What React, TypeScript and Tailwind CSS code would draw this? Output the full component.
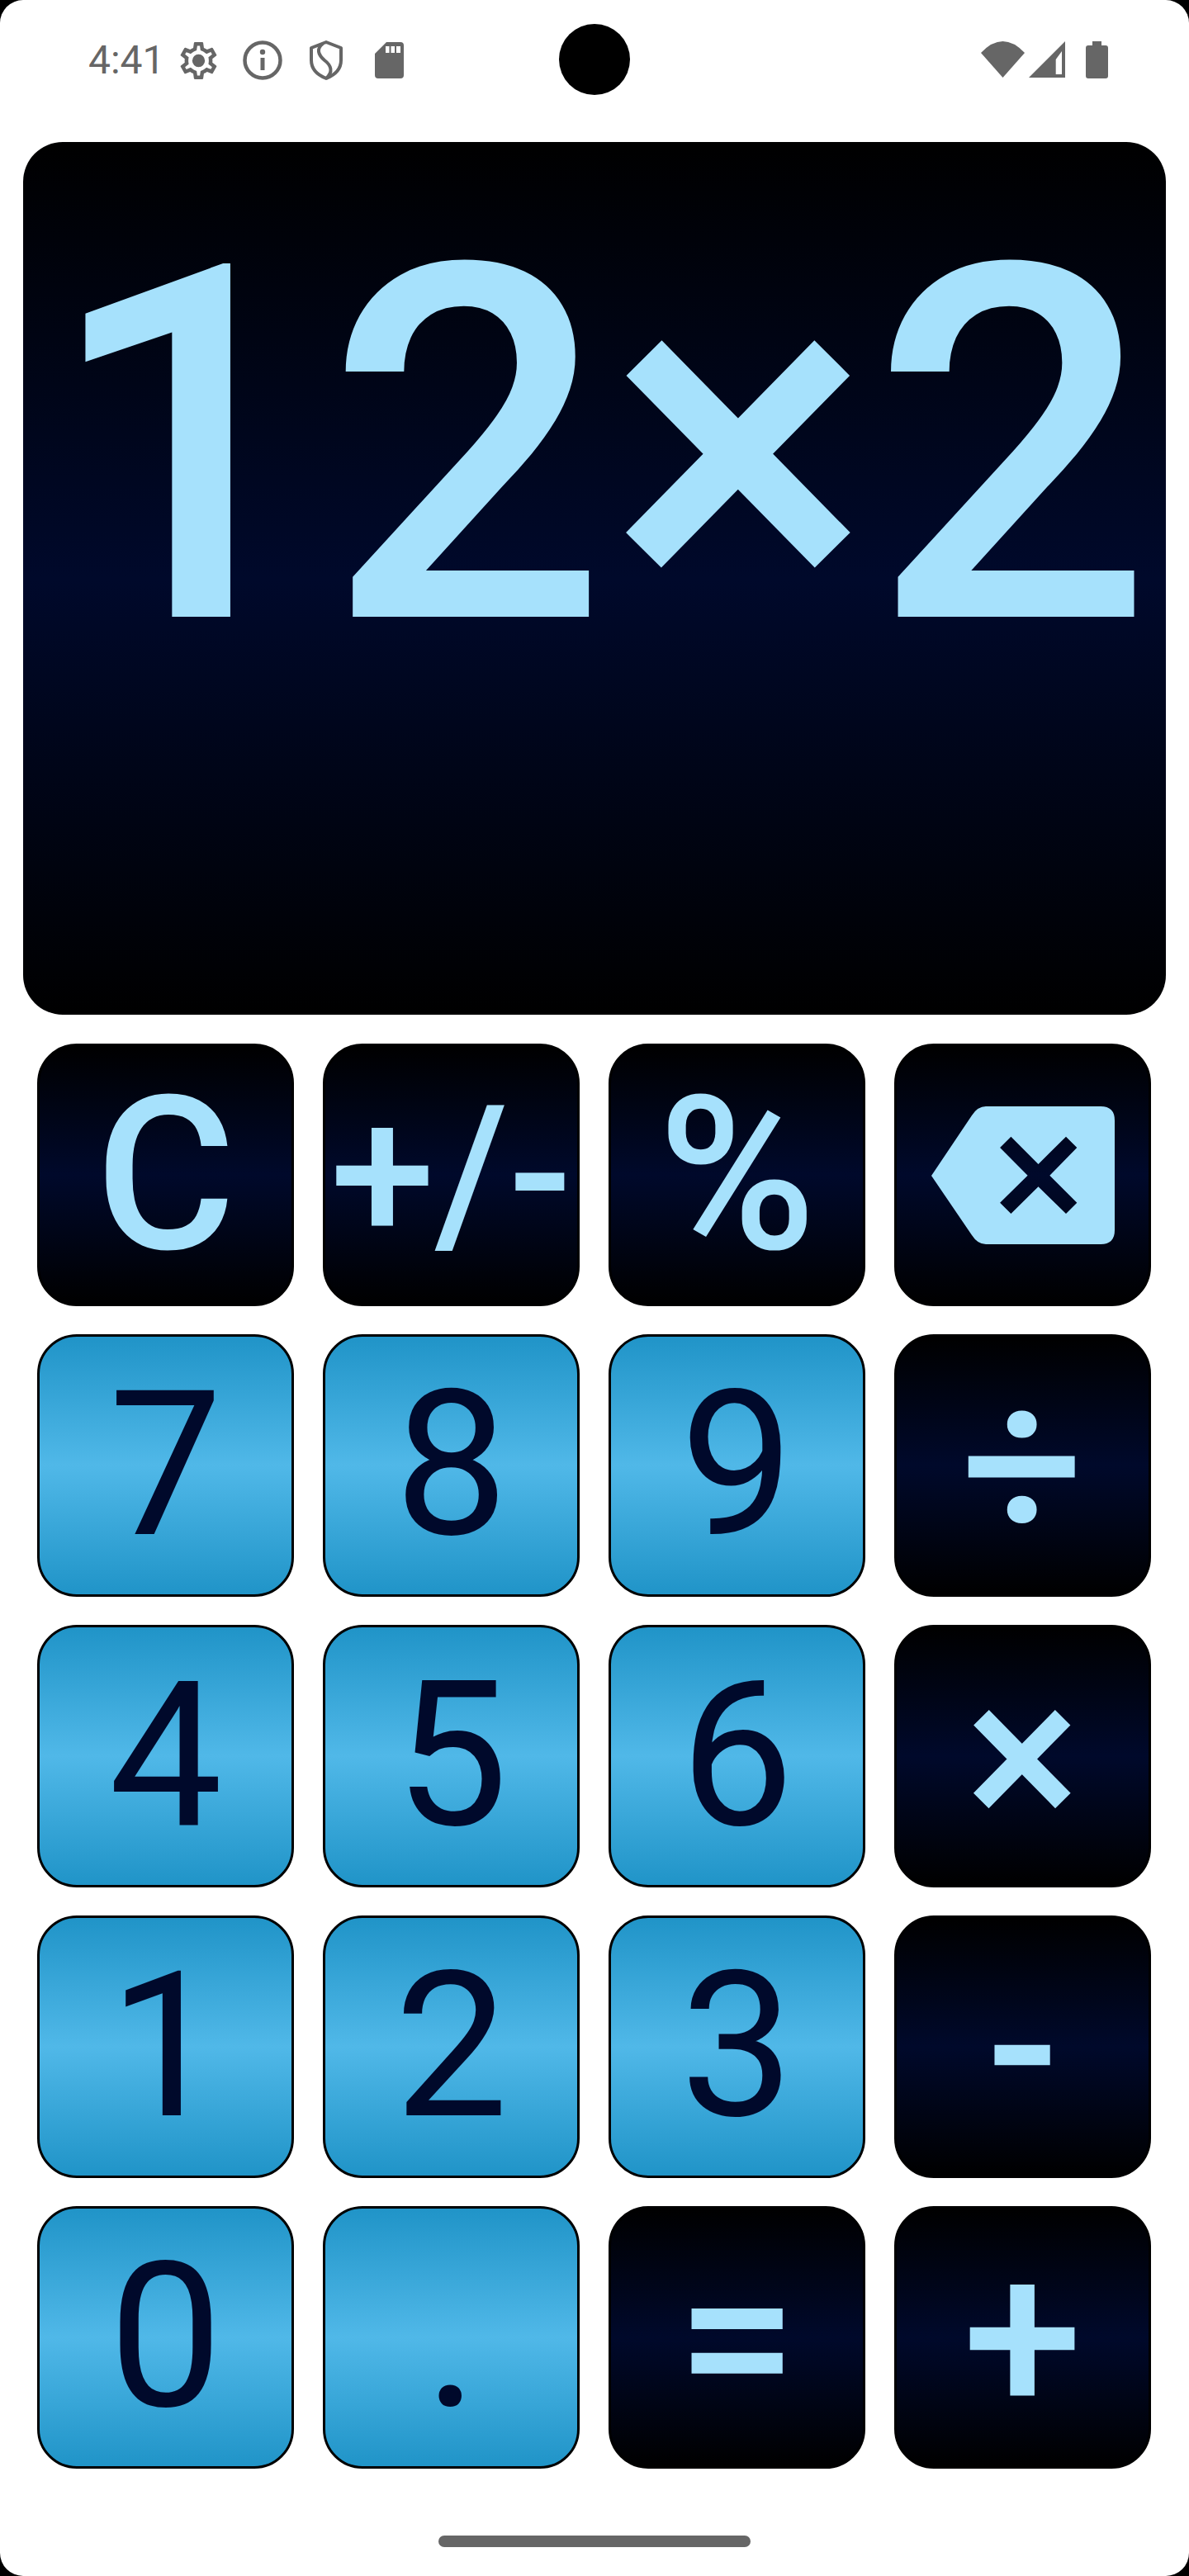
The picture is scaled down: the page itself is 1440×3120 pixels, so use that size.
import { ReactNode } from "react";

type Key = {
  label: ReactNode;
  kind: "op" | "num";
  size?: string;
};

function GearIcon() {
  return (
    <svg viewBox="2 2 20 20" className="h-[45px] w-[45px]" fill="#666666">
      <path d="M19.43 12.98c.04-.32.07-.64.07-.98 0-.34-.03-.66-.07-.98l2.11-1.65c.19-.15.24-.42.12-.64l-2-3.46c-.09-.16-.26-.25-.44-.25-.06 0-.12.01-.17.03l-2.49 1c-.52-.4-1.08-.73-1.69-.98l-.38-2.65C14.46 2.18 14.25 2 14 2h-4c-.25 0-.46.18-.49.42l-.38 2.65c-.61.25-1.17.59-1.69.98l-2.49-1c-.06-.02-.12-.03-.18-.03-.17 0-.34.09-.43.25l-2 3.46c-.13.22-.07.49.12.64l2.11 1.65c-.04.32-.07.65-.07.98 0 .33.03.66.07.98l-2.11 1.65c-.19.15-.24.42-.12.64l2 3.46c.09.16.26.25.44.25.06 0 .12-.01.17-.03l2.49-1c.52.4 1.08.73 1.69.98l.38 2.65c.03.24.24.42.49.42h4c.25 0 .46-.18.49-.42l.38-2.65c.61-.25 1.17-.59 1.69-.98l2.49 1c.06.02.12.03.18.03.17 0 .34-.09.43-.25l2-3.46c.12-.22.07-.49-.12-.64l-2.11-1.65zm-1.98-1.71c.04.31.05.52.05.73 0 .21-.02.43-.05.73l-.14 1.13.89.7 1.08.84-.7 1.21-1.27-.51-1.04-.42-.9.68c-.43.32-.84.56-1.25.73l-1.06.43-.16 1.13-.2 1.35h-1.4l-.19-1.35-.16-1.13-1.06-.43c-.43-.18-.83-.41-1.23-.71l-.91-.7-1.06.43-1.27.51-.7-1.21 1.08-.84.89-.7-.14-1.13c-.03-.31-.05-.54-.05-.74s.02-.43.05-.73l.14-1.13-.89-.7-1.08-.84.7-1.21 1.27.51 1.04.42.9-.68c.43-.32.84-.56 1.25-.73l1.06-.43.16-1.13.2-1.35h1.39l.19 1.35.16 1.13 1.06.43c.43.18.83.41 1.23.71l.91.7 1.06-.43 1.27-.51.7 1.21-1.07.85-.89.7.14 1.13z" />
      <circle cx="12" cy="12" r="3.4" />
    </svg>
  );
}

function InfoIcon() {
  return (
    <svg viewBox="0 0 48 48" className="h-[48px] w-[48px]" fill="#666666">
      <circle cx="24" cy="24" r="21.5" fill="none" stroke="#666666" strokeWidth="4.5" />
      <circle cx="24" cy="14" r="3.2" />
      <rect x="21.5" y="21" width="5" height="15" />
    </svg>
  );
}

function ShieldIcon() {
  return (
    <svg viewBox="0 0 40 48" className="h-[48px] w-[40px]" fill="none" stroke="#666666" strokeWidth="4">
      <path d="M20 2 L38 9 V24 C38 35 30 42 20 46 C10 42 2 35 2 24 V9 Z" strokeLinejoin="round" />
      <path d="M16 4 C8 10 10 17 18 24 C26 30 29 38 20 46" />
    </svg>
  );
}

function SdIcon() {
  return (
    <svg viewBox="0 0 35 44" className="h-[44px] w-[35px]">
      <path
        fillRule="evenodd"
        fill="#666666"
        d="M14 0 H31 a4 4 0 0 1 4 4 V40 a4 4 0 0 1 -4 4 H4 a4 4 0 0 1 -4 -4 V14 Z M13 5 V13 H17.5 V5 Z M19.5 5 V13 H24 V5 Z M26 5 V13 H31 V5 Z"
      />
    </svg>
  );
}

function WifiIcon() {
  return (
    <svg viewBox="0 0 53 44" className="h-[44px] w-[53px]" fill="#666666">
      <path d="M0 14 Q26.5 -14 53 14 L26.5 44 Z" />
    </svg>
  );
}

function SignalIcon() {
  return (
    <svg viewBox="0 0 44 44" className="h-[44px] w-[44px]">
      <path fillRule="evenodd" fill="#666666" d="M0 44 L44 0 V44 Z M32.7 22 V40 H40 V12 Z" />
    </svg>
  );
}

function BatteryIcon() {
  return (
    <svg viewBox="0 0 27 45" className="h-[45px] w-[27px]" fill="#666666">
      <path d="M8 0 H19 V5 H24 a3 3 0 0 1 3 3 V42 a3 3 0 0 1 -3 3 H3 a3 3 0 0 1 -3 -3 V8 a3 3 0 0 1 3 -3 H8 Z" />
    </svg>
  );
}

function BackspaceIcon() {
  return (
    <svg viewBox="0 0 222 167" className="h-[167px] w-[222px]">
      <path
        fillRule="evenodd"
        fill="#a6e1fc"
        d="M0 84 L49 11 Q56 0 66 0 H205 Q222 0 222 17 V150 Q222 167 205 167 H66 Q56 167 49 156 Z M96.4 36.7 L83.1 50 L116.6 83.7 L83.1 116.7 L96.4 130 L129.5 97.3 L163 130 L176.3 116.7 L143.3 83.7 L176.3 50 L163 36.7 L129.5 70 Z"
      />
    </svg>
  );
}

const keys: Key[] = [
  { label: "C", kind: "op" },
  { label: "+/-", kind: "op", size: "text-[228px]" },
  { label: "%", kind: "op" },
  { label: <BackspaceIcon />, kind: "op" },
  { label: "7", kind: "num" },
  { label: "8", kind: "num" },
  { label: "9", kind: "num" },
  { label: "÷", kind: "op" },
  { label: "4", kind: "num" },
  { label: "5", kind: "num" },
  { label: "6", kind: "num" },
  { label: "×", kind: "op" },
  { label: "1", kind: "num" },
  { label: "2", kind: "num" },
  { label: "3", kind: "num" },
  { label: "-", kind: "op" },
  { label: "0", kind: "num" },
  { label: ".", kind: "num" },
  { label: "=", kind: "op" },
  { label: "+", kind: "op" },
];

function CalcKey({ label, kind, size }: Key) {
  const tone =
    kind === "op"
      ? `from-black via-[#00092b] to-black text-[#a6e1fc] font-medium ${size ?? "text-[260px]"}`
      : "from-[#2094c8] via-[#50b8e8] to-[#2094c8] text-[#00092b] text-[245px]";
  return (
    <button
      className={`flex h-[318px] items-center justify-center overflow-hidden whitespace-nowrap rounded-[48px] border-[3px] border-black bg-linear-to-b/srgb ${tone}`}
    >
      {label}
    </button>
  );
}

export default function App() {
  return (
    <div className="h-[3120px] w-[1440px] bg-black font-['Roboto',sans-serif]">
      <div className="flex h-full flex-col overflow-hidden rounded-[28px] bg-white">
        <header className="grid h-[172px] shrink-0 grid-cols-[1fr_86px_1fr] items-start">
          <div className="flex h-[146px] items-center pl-[107px] text-[48px] text-[#666666]">
            <span className="w-[88px]">4:41</span>
            <span className="ml-[23px]"><GearIcon /></span>
            <span className="ml-[31px]"><InfoIcon /></span>
            <span className="ml-[33px]"><ShieldIcon /></span>
            <span className="ml-[39px]"><SdIcon /></span>
          </div>
          <div className="mt-[29px] h-[86px] w-[86px] rounded-full bg-black" />
          <div className="flex h-[144px] items-center justify-end gap-[5px] pr-[98px]">
            <WifiIcon />
            <SignalIcon />
            <span className="ml-[20px]"><BatteryIcon /></span>
          </div>
        </header>

        <section className="mx-[28px] flex h-[1057px] shrink-0 justify-center overflow-hidden rounded-[48px] bg-linear-to-b/srgb from-black via-[#00092b] to-black pt-[18px] pl-[10px] text-[600px] leading-[703px] font-medium whitespace-nowrap text-[#a6e1fc]">
          12×2
        </section>

        <main className="mt-[35px] grid grid-cols-[repeat(4,311px)] gap-x-[35px] gap-y-[34px] pl-[45px]">
          {keys.map((k, i) => (
            <CalcKey key={i} {...k} />
          ))}
        </main>

        <div className="mx-auto mt-[81px] h-[14px] w-[378px] rounded-full bg-[#666666]" />
      </div>
    </div>
  );
}
